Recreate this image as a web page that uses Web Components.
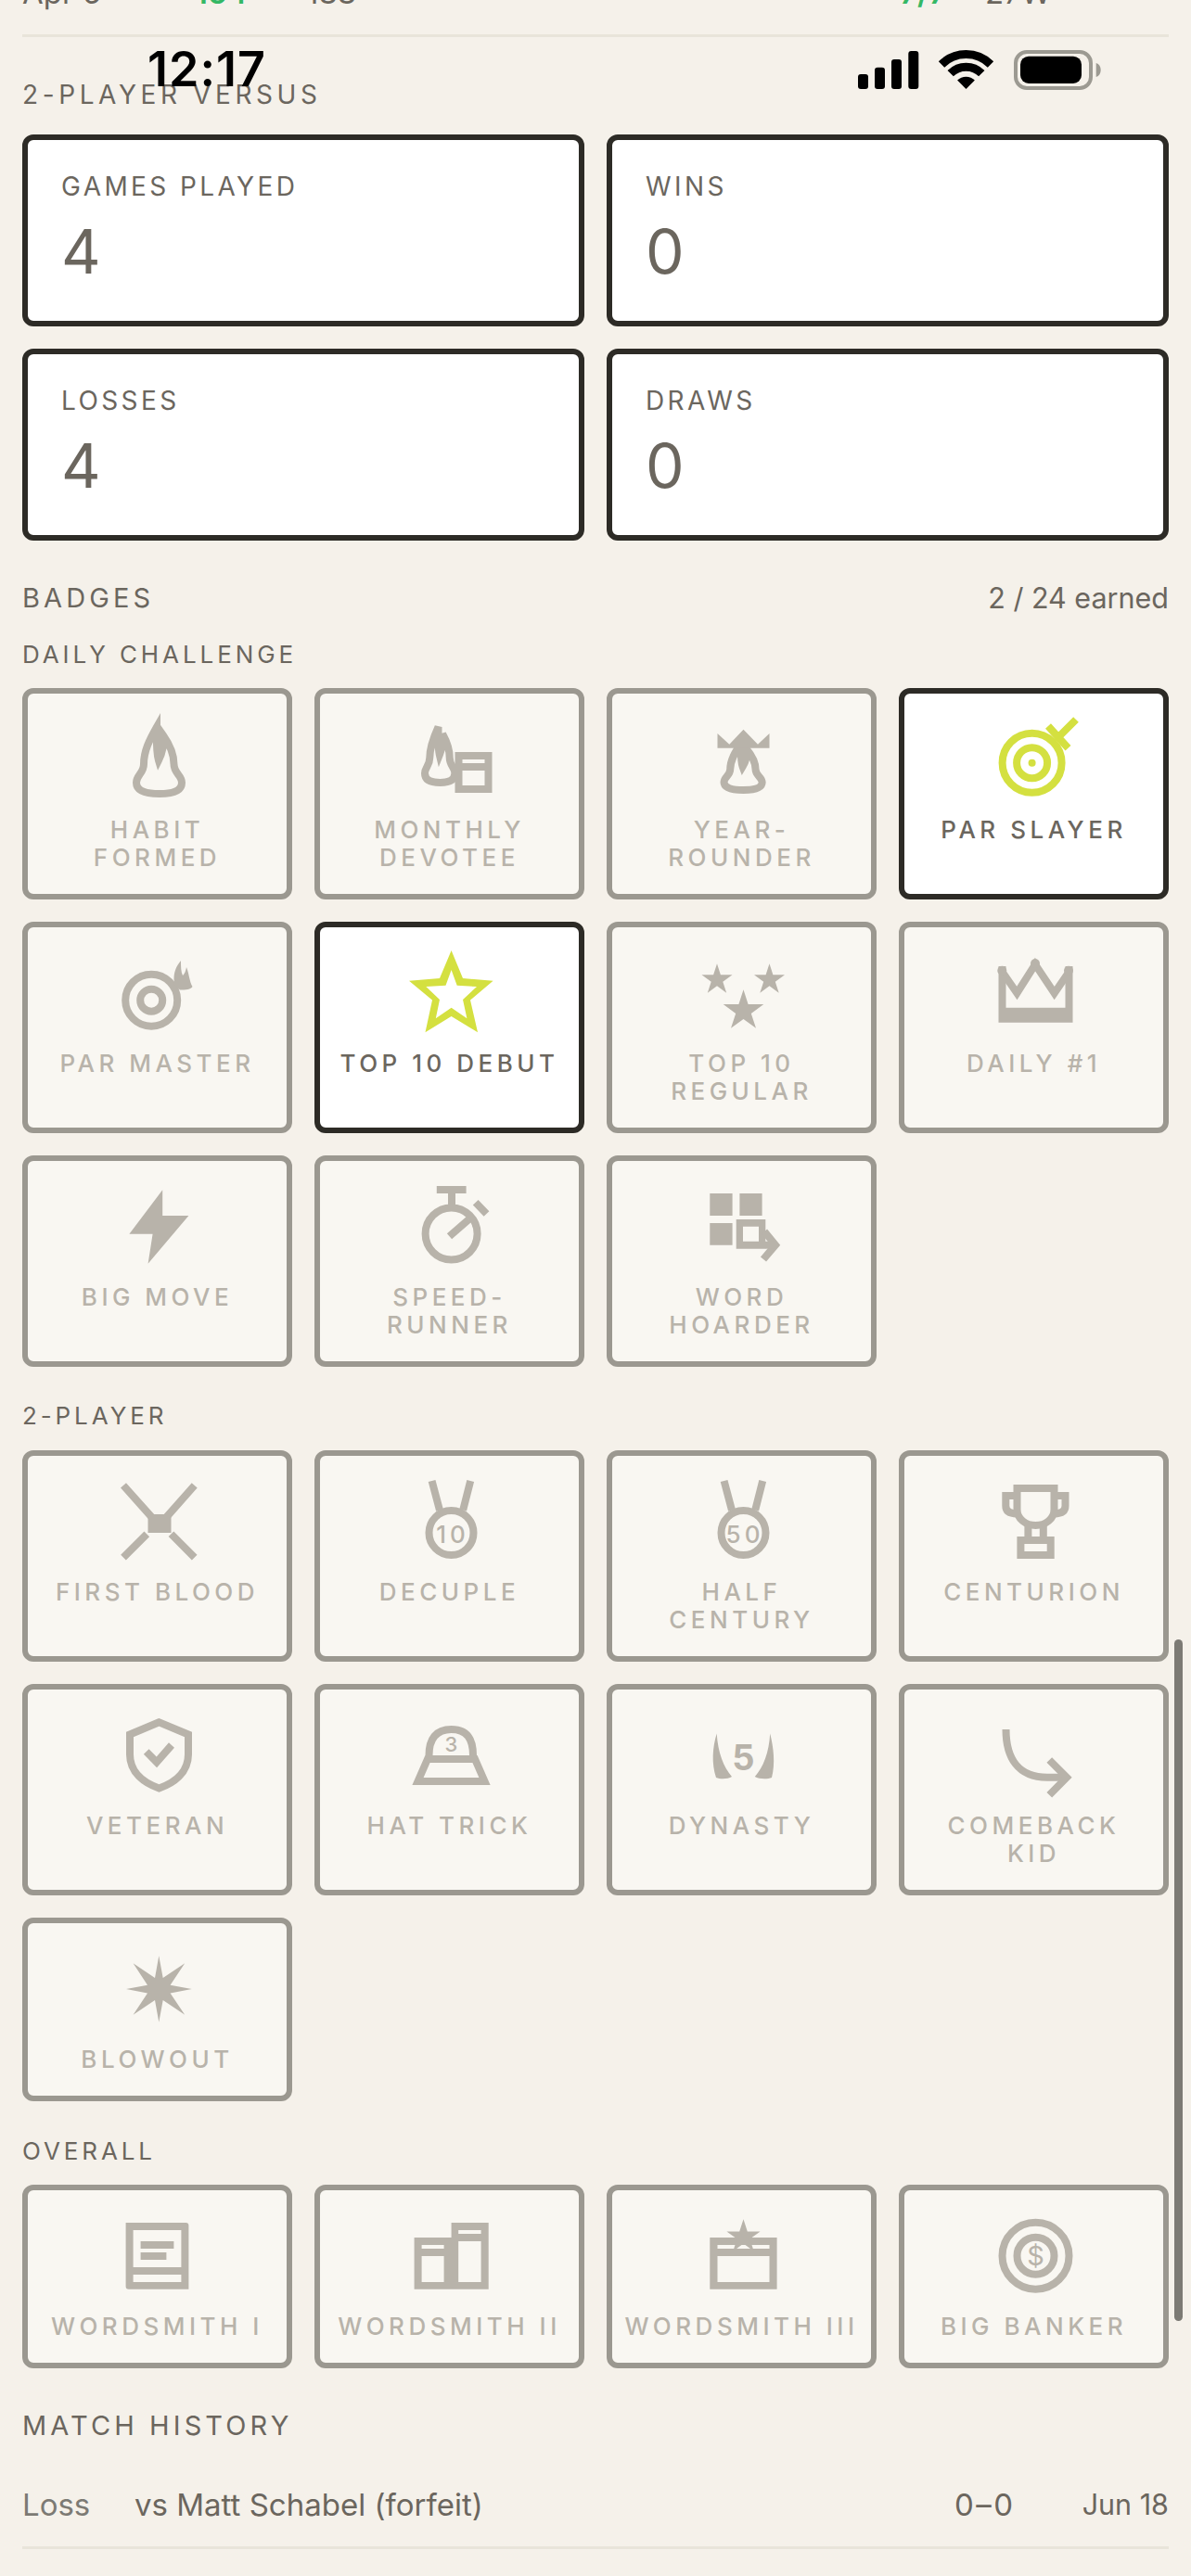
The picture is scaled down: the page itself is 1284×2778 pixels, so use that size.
<!DOCTYPE html>
<html>
<head>
<meta charset="utf-8">
<title>Stats</title>
<style>
  html, body { margin: 0; background: #f5f1ea; }
  body { font-family: Inter, sans-serif; color: #6b665e; }
</style>
</head>
<body>
<stats-screen>
  <status-bar></status-bar>
  <day-row></day-row>
  <section-title style="margin:47px 0 28px">2-PLAYER VERSUS</section-title>
  <stat-grid>
    <stat-card label="GAMES PLAYED" value="4"></stat-card>
    <stat-card label="WINS" value="0"></stat-card>
    <stat-card label="LOSSES" value="4"></stat-card>
    <stat-card label="DRAWS" value="0"></stat-card>
  </stat-grid>
  <section-title big note="2 / 24 earned" style="margin-top:44px">BADGES</section-title>
  <sub-title style="margin:28px 0 21px">DAILY CHALLENGE</sub-title>
  <badge-grid>
    <badge-card icon="habit">HABIT<br>FORMED</badge-card>
    <badge-card icon="monthly">MONTHLY<br>DEVOTEE</badge-card>
    <badge-card icon="year">YEAR-<br>ROUNDER</badge-card>
    <badge-card icon="slayer" earned>PAR SLAYER</badge-card>
    <badge-card icon="master">PAR MASTER</badge-card>
    <badge-card icon="debut" earned>TOP 10 DEBUT</badge-card>
    <badge-card icon="regular">TOP 10<br>REGULAR</badge-card>
    <badge-card icon="crown">DAILY #1</badge-card>
    <badge-card icon="bolt">BIG MOVE</badge-card>
    <badge-card icon="speed">SPEED-<br>RUNNER</badge-card>
    <badge-card icon="hoarder">WORD<br>HOARDER</badge-card>
  </badge-grid>
  <sub-title style="margin:38px 0 22px">2-PLAYER</sub-title>
  <badge-grid>
    <badge-card icon="blood">FIRST BLOOD</badge-card>
    <badge-card icon="decuple">DECUPLE</badge-card>
    <badge-card icon="half">HALF<br>CENTURY</badge-card>
    <badge-card icon="trophy">CENTURION</badge-card>
    <badge-card icon="shield">VETERAN</badge-card>
    <badge-card icon="hat">HAT TRICK</badge-card>
    <badge-card icon="dynasty">DYNASTY</badge-card>
    <badge-card icon="comeback">COMEBACK<br>KID</badge-card>
    <badge-card icon="blowout">BLOWOUT</badge-card>
  </badge-grid>
  <sub-title style="margin:39px 0 21px">OVERALL</sub-title>
  <badge-grid>
    <badge-card icon="book1">WORDSMITH I</badge-card>
    <badge-card icon="book2">WORDSMITH II</badge-card>
    <badge-card icon="book3">WORDSMITH III</badge-card>
    <badge-card icon="banker">BIG BANKER</badge-card>
  </badge-grid>
  <section-title big style="margin-top:44px">MATCH HISTORY</section-title>
  <match-row result="Loss" opponent="vs Matt Schabel (forfeit)" score="0–0" date="Jun 18"></match-row>
  <scroll-thumb></scroll-thumb>
</stats-screen>

<script>
// points of a five pointed star, r is the outer radius
function star(cx, cy, r) {
  var pts = [];
  for (var i = 0; i < 10; i++) {
    var rad = i % 2 ? r * 0.382 : r;
    var a = -Math.PI / 2 + i * Math.PI / 5;
    pts.push((cx + rad * Math.cos(a)).toFixed(1) + ',' + (cy + rad * Math.sin(a)).toFixed(1));
  }
  return pts.join(' ');
}

const FLAME = 'M47 18C39 32 33 44 33 58C33 68 25 70 25 78C25 87 36 90 50 90C64 90 74 87 74 78C74 70 65.5 68 65.5 58C65.5 46 61 37 54 27C55 38 53 46 49 54C46 44 47 30 47 18Z';
const flame = (t) => `<path class="s" d="${FLAME}" transform="${t}" vector-effect="non-scaling-stroke" stroke-width="5.5"/>`;
const medal = (txt) => `<circle class="s" cx="49.5" cy="65" r="24"/><path class="s" d="M28.6 9L37 40.6M70.2 9L62.2 40.6"/><text x="51" y="76" font-size="26" letter-spacing="4" font-weight="500">${txt}</text>`;

// every icon sits in a 96 x 96 box
const ICONS = {
  habit: flame(''),
  monthly: flame('translate(4.5 3) scale(.66 .833)') +
    '<path class="f" fill-rule="evenodd" d="M53.5 45H93.5V89H53.5ZM61.5 53V57H85.5V53ZM61.5 65V81H85.5V65Z"/>',
  year: flame('translate(7.5 23) scale(.84 .7)') +
    '<polygon class="f" points="21.5,25 34.3,36.7 49.5,20.7 65,36.7 77.5,25 77.5,40.7 21.5,40.7"/>',
  slayer: '<circle class="s" cx="45.6" cy="56.7" r="32"/><circle class="s" cx="45.6" cy="56.7" r="16.5" stroke-width="7"/><circle class="f" cx="45.6" cy="56.7" r="4"/><path class="s" d="M74 29L93 10M63 17L84.5 40.7"/>',
  master: '<circle class="s" cx="41.2" cy="60.7" r="28"/><circle class="s" cx="41.2" cy="60.7" r="12"/><path class="f" d="M73 18C68 24 65.5 30 65.5 38L66 44L72 49.5C78 49.5 84 49 85.5 46C82 40 82 32 79 25C78 30 77 32 75 34C73 30 73 24 73 18Z"/>',
  debut: '<path class="f" fill-rule="evenodd" d="M49.6 7L62 37L94.6 39.7L70 60.5L78 95.3L49.6 78L21.5 95.3L29 60.5L4 39.7L37 37ZM49.6 28L43.5 44.7L22.3 46L37 60L32.8 80.3L49.6 68.7L66.4 80.3L62 60L77 46L55.7 44.7Z"/>',
  regular: `<polygon class="f" points="${star(21, 38.7, 17.4)}"/><polygon class="f" points="${star(77.5, 38.7, 17.4)}"/><polygon class="f" points="${star(49.5, 72.2, 22.9)}"/>`,
  crown: '<path class="s" d="M13.5 30L29.4 53L49 22L69.7 53L85.5 30"/><path class="f" d="M9.5 24H17.5V68.7H81.5V24H89.5V84.7H9.5Z"/><circle class="f" cx="49" cy="21" r="5"/><circle class="f" cx="13.3" cy="28.7" r="5"/><circle class="f" cx="85" cy="28.7" r="5"/>',
  bolt: '<polygon class="f" points="53.2,13.3 53.2,41 81.4,41 37.6,92.7 42.6,60.7 17.4,60.7"/>',
  speed: '<circle class="s" cx="49.6" cy="60.5" r="28"/><path class="s" d="M33.8 13H65.6M50 17V32M47.5 63.3L68.5 45M75.7 26.7L87.5 39"/>',
  hoarder: '<path class="f" fill-rule="evenodd" d="M13.3 17H37.6V41H13.3ZM45.4 17H69.6V41H45.4ZM13.3 49H37.6V72.7H13.3ZM41.7 45H73.3V76.7H41.7ZM49 52.7V68.7H66V52.7Z"/><path class="s" d="M72 58L84 72.7L71 88"/><rect class="f" x="73" y="68.7" width="10" height="8"/>',
  blood: '<path class="s" d="M11 13.8L45 52M87.7 13.8L54 52M11 91.6L36.3 66.3M87.7 91.6L62.5 66.3"/><rect class="f" x="37.5" y="45" width="25" height="20"/>',
  decuple: medal('10'),
  half: medal('50'),
  trophy: '<path class="s" d="M29.5 17H69.5V40C69.5 50 60 57 49.5 57C39 57 29.5 50 29.5 40Z"/><path class="s" d="M29.5 25H17.3V36C17.3 42 22 44.4 29.5 44.4M69.5 25H81.5V36C81.5 42 77 44.4 69.5 44.4"/><path class="s" d="M41.4 57V69M57.8 57V69"/><rect class="s" x="33.4" y="73" width="32.3" height="16"/>',
  shield: '<path class="s" d="M49.5 17.3L18 30.5V52C18 72 34 83 49.5 88.5C65 83 81 72 81 52V30.5Z"/><path class="s" d="M35.7 49L46.9 60.3L63 42"/>',
  hat: '<path class="s" d="M25.5 53C25.5 35 33 25 49.5 25C66 25 73 35 73 53" stroke-width="7"/><polygon class="s" points="24,57 75,57 85.5,81 13.5,81"/><text x="49.5" y="49" font-size="22" font-weight="500">3</text>',
  dynasty: '<path class="f" d="M20.7 29.6C16 45 15 62 20 77C25 79 33 78.5 37 76C28 66 22 50 20.7 29.6Z"/><path class="f" d="M78.2 29.6C82 45 84 62 80 77C75 79 66 78.5 61.8 76C71 66 77 50 78.2 29.6Z"/><text x="49.5" y="69" font-size="38" font-weight="700">5</text>',
  comeback: '<path class="s" d="M17.5 25C17.5 55 30 76.8 62 76.8H82"/><path class="s" d="M64.3 58L83 76.8L64.3 95.7"/>',
  blowout: '<polygon class="f" points="49.3,17.3 53.7,41 77.2,25.3 61.6,48.7 84.7,53 61.6,57.5 77.2,80.7 53.7,65 49.3,88.7 45,65 21.6,80.7 37,57.5 14,53 37,48.7 21.6,25.3 45,41"/>',
  book1: '<path class="f" fill-rule="evenodd" d="M13.6 17H78.4Q81.4 17 81.4 20V88.7H16.6Q13.6 88.7 13.6 85.7ZM21.6 25V65H73.4V25ZM21.6 73V81H73.4V73ZM29.6 37V45H65.4V37ZM29.6 49V57H57.4V49Z"/>',
  book2: '<path class="f" fill-rule="evenodd" d="M9.6 33H49.6V17H89.7V88.7H9.6ZM17.6 41V45H41.6V41ZM17.6 53V81H41.6V53ZM57.2 25V29H81.6V25ZM57.2 37V81H81.6V37Z"/>',
  book3: `<path class="f" fill-rule="evenodd" d="M13.3 33H85.6V88.7H13.3ZM21.5 41V45H77.5V41ZM21.5 53V81H77.5V53Z"/><polygon class="f" points="${star(49.5, 32.3, 19)}"/>`,
  banker: '<circle class="s" cx="49.5" cy="52.7" r="36"/><circle class="s" cx="49.5" cy="52.7" r="20"/><text x="49.5" y="63" font-size="29">$</text>'
};

window.customElements.define('stats-screen', class extends HTMLElement {
  constructor() {
    super();
    this.attachShadow({mode: 'open'});
    this.shadowRoot.innerHTML = `<style>
      :host { display: block; position: relative; box-sizing: border-box; height: 2778px; padding: 0 24px; overflow: hidden; background: #f5f1ea; }
    </style><slot></slot>`;
  }
});

window.customElements.define('status-bar', class extends HTMLElement {
  constructor() {
    super();
    this.attachShadow({mode: 'open'});
    this.shadowRoot.innerHTML = `<style>
      :host { position: absolute; top: 50px; left: 0; right: 0; height: 50px; display: flex; justify-content: space-between; align-items: center; padding: 0 97px 0 159px; color: #000; z-index: 3; }
      span { font: 600 52px/50px Inter, sans-serif; letter-spacing: 1px; }
      svg { display: block; }
    </style>
    <span>12:17</span>
    <svg width="262" height="50" viewBox="925 50 262 50">
      <rect x="925" y="80" width="11" height="16" rx="3"/>
      <rect x="943" y="72.7" width="11" height="23.3" rx="3"/>
      <rect x="961" y="64" width="11" height="32" rx="3"/>
      <rect x="979.3" y="55" width="11" height="41" rx="3"/>
      <g transform="translate(1041.5 96)">
        <path d="M-26.5 -26.5A37.5 37.5 0 0 1 26.5 -26.5M-16.8 -16.8A23.7 23.7 0 0 1 16.8 -16.8" fill="none" stroke="#000" stroke-width="9"/>
        <path d="M0 0L-9.4 -9.4A13.3 13.3 0 0 1 9.4 -9.4Z"/>
      </g>
      <rect x="1095" y="56" width="81" height="39" rx="12" fill="none" stroke="#9c9a92" stroke-width="4"/>
      <rect x="1100" y="60.7" width="66" height="29.3" rx="9"/>
      <path d="M1181.7 68C1185 69 1186.7 72 1186.7 75.5C1186.7 79 1185 82 1181.7 83Z" fill="#9c9a92"/>
    </svg>`;
  }
});

window.customElements.define('day-row', class extends HTMLElement {
  constructor() {
    super();
    this.attachShadow({mode: 'open'});
    this.shadowRoot.innerHTML = `<style>
      :host { display: block; margin-top: -32px; padding-bottom: 21px; border-bottom: 3px solid #e8e4da; font-size: 33px; line-height: 48px; color: #6b665e; position: relative; height: 48px; }
      span { position: absolute; top: 0; }
      .g { color: #34b865; font-weight: 600; }
    </style>
    <span style="left:0">Apr 6</span>
    <span class="g" style="left:186px">154</span>
    <span style="left:306px">188</span>
    <span class="g" style="left:946px">7/7</span>
    <span style="left:1038px">27W</span>`;
  }
});

window.customElements.define('section-title', class extends HTMLElement {
  constructor() {
    super();
    this.attachShadow({mode: 'open'});
    const note = this.getAttribute('note');
    this.shadowRoot.innerHTML = `<style>
      :host { display: flex; justify-content: space-between; font-size: 28px; line-height: 30px; letter-spacing: 4.6px; color: #6b665e; }
      :host([big]) { font-size: 29px; line-height: 36px; letter-spacing: 4.1px; }
      i { font-style: normal; letter-spacing: 0; font-size: 30.5px; }
    </style><span><slot></slot></span>${note ? `<i>${note}</i>` : ''}`;
  }
});

window.customElements.define('sub-title', class extends HTMLElement {
  constructor() {
    super();
    this.attachShadow({mode: 'open'});
    this.shadowRoot.innerHTML = `<style>
      :host { display: block; font-size: 26px; line-height: 30px; letter-spacing: 3.9px; color: #6b665e; }
    </style><slot></slot>`;
  }
});

window.customElements.define('stat-grid', class extends HTMLElement {
  constructor() {
    super();
    this.attachShadow({mode: 'open'});
    this.shadowRoot.innerHTML = `<style>
      :host { display: grid; grid-template-columns: 606px 606px; gap: 24px; }
    </style><slot></slot>`;
  }
});

window.customElements.define('stat-card', class extends HTMLElement {
  constructor() {
    super();
    this.attachShadow({mode: 'open'});
    this.shadowRoot.innerHTML = `<style>
      :host { display: block; box-sizing: border-box; height: 207px; padding: 32px 36px; background: #fff; border: 6px solid #2d2b26; border-radius: 12px; }
      .l { font-size: 28px; line-height: 36px; letter-spacing: 3.4px; color: #6b665e; }
      .v { font-size: 66px; line-height: 72px; margin-top: 16px; color: #6b665e; }
    </style><div class="l">${this.getAttribute('label')}</div><div class="v">${this.getAttribute('value')}</div>`;
  }
});

window.customElements.define('badge-grid', class extends HTMLElement {
  constructor() {
    super();
    this.attachShadow({mode: 'open'});
    this.shadowRoot.innerHTML = `<style>
      :host { display: grid; grid-template-columns: repeat(4, 291px); gap: 24px; }
    </style><slot></slot>`;
  }
});

window.customElements.define('badge-card', class extends HTMLElement {
  constructor() {
    super();
    this.attachShadow({mode: 'open'});
    this.shadowRoot.innerHTML = `<style>
      :host { display: flex; flex-direction: column; align-items: center; box-sizing: border-box; padding: 18px 6px 24px; background: #f9f7f2; border: 6px solid #9b9890; border-radius: 12px; color: #b8b3aa; --icon: #b8b3aa; }
      :host([earned]) { background: #fff; border-color: #2d2b26; color: #6b665e; --icon: #d4e040; }
      svg { display: block; width: 96px; height: 96px; margin-bottom: 18px; overflow: visible; }
      .f { fill: var(--icon); }
      .s { fill: none; stroke: var(--icon); stroke-width: 8; }
      text { fill: var(--icon); text-anchor: middle; font-family: Inter, sans-serif; }
      .t { font-size: 26px; font-weight: 500; line-height: 30px; letter-spacing: 4.5px; text-align: center; white-space: nowrap; }
    </style>
    <svg viewBox="0 0 96 96">${ICONS[this.getAttribute('icon')]}</svg>
    <div class="t"><slot></slot></div>`;
  }
});

window.customElements.define('match-row', class extends HTMLElement {
  constructor() {
    super();
    this.attachShadow({mode: 'open'});
    this.shadowRoot.innerHTML = `<style>
      :host { display: flex; align-items: center; margin-top: 46px; padding-bottom: 24px; border-bottom: 3px solid #e8e4da; font-size: 33px; line-height: 42px; color: #6b665e; }
      .r { width: 121px; color: #7c7a74; }
      .o { flex: 1; }
      .s { letter-spacing: 2.5px; }
      .d { font-size: 30.5px; margin-left: 72px; }
    </style>
    <span class="r">${this.getAttribute('result')}</span>
    <span class="o">${this.getAttribute('opponent')}</span>
    <span class="s">${this.getAttribute('score')}</span>
    <span class="d">${this.getAttribute('date')}</span>`;
  }
});

window.customElements.define('scroll-thumb', class extends HTMLElement {
  constructor() {
    super();
    this.attachShadow({mode: 'open'});
    this.shadowRoot.innerHTML = `<style>
      :host { position: absolute; left: 1266px; top: 1768px; width: 9px; height: 735px; border-radius: 5px; background: #7c7a74; }
    </style>`;
  }
});
</script>
</body>
</html>
